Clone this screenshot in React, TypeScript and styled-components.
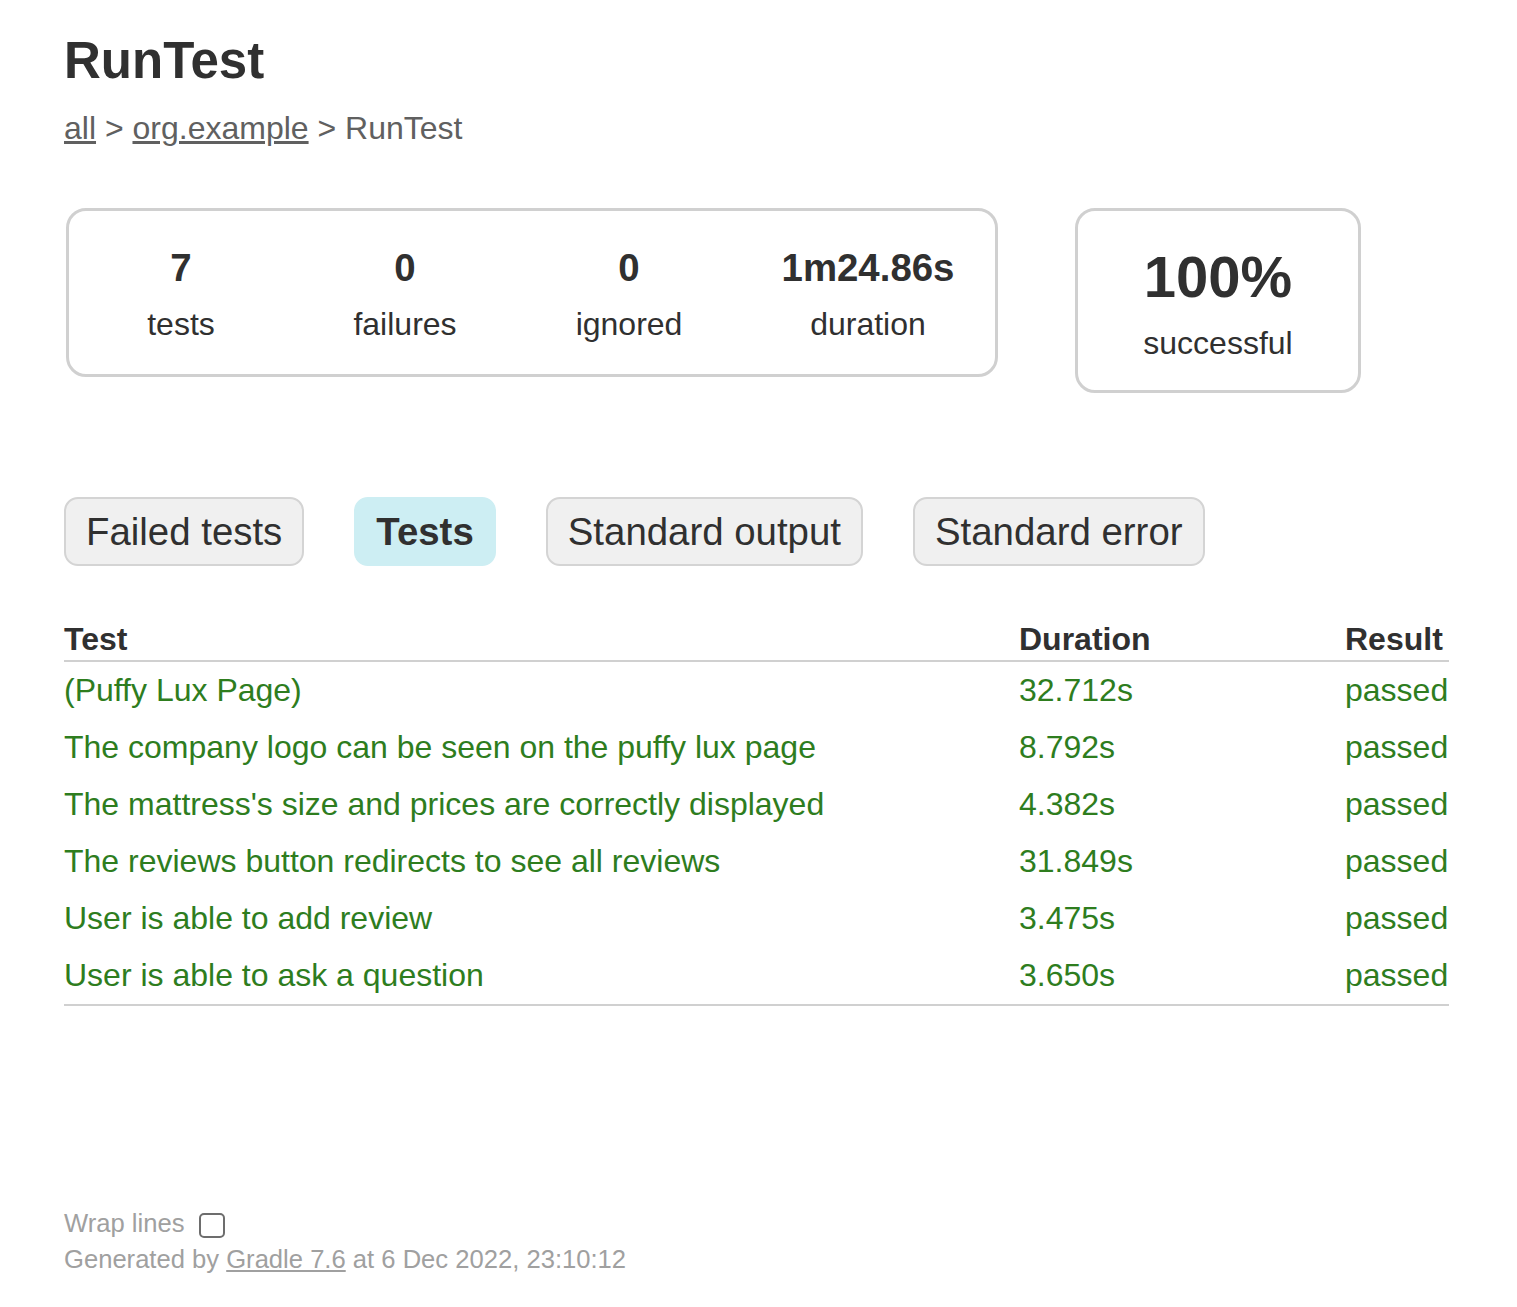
import React from "react";
import styled, { createGlobalStyle } from "styled-components";

const GlobalStyle = createGlobalStyle`
  html, body {
    margin: 0;
    padding: 0;
    background: #ffffff;
  }
  body {
    font-family: "Liberation Sans", Arial, Helvetica, sans-serif;
    color: #303030;
  }
`;

const Page = styled.div`
  padding: 31px 0 40px 64px;
`;

const Title = styled.h1`
  margin: 0;
  font-size: 51px;
  line-height: 60px;
  font-weight: bold;
  color: #303030;
  white-space: nowrap;
`;

const Breadcrumbs = styled.div`
  margin-top: 19px;
  font-size: 32px;
  line-height: 37px;
  color: #606060;
`;

const Crumb = styled.a`
  color: #606060;
  text-decoration: underline;
`;

const Summary = styled.div`
  display: flex;
  align-items: flex-start;
  margin-top: 61px;
  margin-left: 2px;
`;

const SummaryGroup = styled.div`
  display: flex;
  border: 3px solid #d0d0d0;
  border-radius: 20px;
`;

const InfoBox = styled.div<{ $width: number }>`
  width: ${(p) => p.$width}px;
  padding: 35px 0 31px;
  text-align: center;
`;

const Counter = styled.div`
  font-size: 38.4px;
  line-height: 44px;
  font-weight: bold;
  margin-bottom: 16px;
`;

const Percent = styled.div`
  font-size: 58px;
  line-height: 66px;
  font-weight: bold;
  margin-bottom: 15px;
`;

const Label = styled.div`
  font-size: 32px;
  line-height: 37px;
`;

const SuccessBox = styled.div`
  margin-left: 77px;
  width: 280px;
  border: 3px solid #d0d0d0;
  border-radius: 20px;
  padding: 33px 0 28px;
  text-align: center;
`;

const TabList = styled.ul`
  display: flex;
  gap: 50px;
  list-style: none;
  margin: 104px 0 0;
  padding: 0;
`;

const Tab = styled.li<{ $selected?: boolean }>`
  border: 2px solid ${(p) => (p.$selected ? "#cdeef3" : "#d4d4d4")};
  background: ${(p) => (p.$selected ? "#cdeef3" : "#f0f0f0")};
  border-radius: 14px;
  padding: 11px 20px 10px;
  font-size: 38.4px;
  line-height: 44px;
  font-weight: ${(p) => (p.$selected ? "bold" : "normal")};
  color: #303030;
  white-space: nowrap;
`;

const Table = styled.table`
  margin-top: 53px;
  width: 1385px;
  border-collapse: collapse;
  table-layout: fixed;
  border-bottom: 2px solid #d0d0d0;
`;

const Col = styled.col<{ $width: number }>`
  width: ${(p) => p.$width}px;
`;

const Th = styled.th`
  text-align: left;
  font-size: 32px;
  line-height: 37px;
  font-weight: bold;
  padding: 2px 0;
  color: #303030;
  border-bottom: 2px solid #d0d0d0;
  white-space: nowrap;
`;

const Td = styled.td`
  font-size: 32px;
  line-height: 37px;
  padding: 10px 0;
  color: #2e7d1e;
  white-space: nowrap;
`;

const Footer = styled.div`
  margin-top: 202px;
  font-size: 25.6px;
  color: #a0a0a0;
`;

const WrapRow = styled.label`
  display: flex;
  align-items: center;
  height: 31px;
  line-height: 31px;
`;

const Checkbox = styled.input`
  appearance: none;
  -webkit-appearance: none;
  box-sizing: border-box;
  width: 26px;
  height: 25px;
  margin: 4px 0 0 15px;
  border: 2px solid #6d6d6d;
  border-radius: 5px;
  background: #ffffff;
`;

const Generated = styled.div`
  margin-top: 5px;
  line-height: 30px;
  white-space: nowrap;
`;

const FooterLink = styled.a`
  color: #a0a0a0;
  text-decoration: underline;
`;

const rows = [
  { name: "(Puffy Lux Page)", duration: "32.712s" },
  { name: "The company logo can be seen on the puffy lux page", duration: "8.792s" },
  { name: "The mattress's size and prices are correctly displayed", duration: "4.382s" },
  { name: "The reviews button redirects to see all reviews", duration: "31.849s" },
  { name: "User is able to add review", duration: "3.475s" },
  { name: "User is able to ask a question", duration: "3.650s" },
];

const counters = [
  { value: "7", label: "tests", width: 224 },
  { value: "0", label: "failures", width: 224 },
  { value: "0", label: "ignored", width: 224 },
  { value: "1m24.86s", label: "duration", width: 254 },
];

const tabs = ["Failed tests", "Tests", "Standard output", "Standard error"];

export default function App() {
  return (
    <>
      <GlobalStyle />
      <Page>
        <Title>RunTest</Title>
        <Breadcrumbs>
          <Crumb href="#">all</Crumb> &gt; <Crumb href="#">org.example</Crumb> &gt; RunTest
        </Breadcrumbs>
        <Summary>
          <SummaryGroup>
            {counters.map((c) => (
              <InfoBox key={c.label} $width={c.width}>
                <Counter>{c.value}</Counter>
                <Label>{c.label}</Label>
              </InfoBox>
            ))}
          </SummaryGroup>
          <SuccessBox>
            <Percent>100%</Percent>
            <Label>successful</Label>
          </SuccessBox>
        </Summary>
        <TabList>
          {tabs.map((t) => (
            <Tab key={t} $selected={t === "Tests"}>
              {t}
            </Tab>
          ))}
        </TabList>
        <Table>
          <colgroup>
            <Col $width={955} />
            <Col $width={326} />
            <Col $width={104} />
          </colgroup>
          <thead>
            <tr>
              <Th>Test</Th>
              <Th>Duration</Th>
              <Th>Result</Th>
            </tr>
          </thead>
          <tbody>
            {rows.map((r) => (
              <tr key={r.name}>
                <Td>{r.name}</Td>
                <Td>{r.duration}</Td>
                <Td>passed</Td>
              </tr>
            ))}
          </tbody>
        </Table>
        <Footer>
          <WrapRow>
            Wrap lines
            <Checkbox type="checkbox" autoComplete="off" />
          </WrapRow>
          <Generated>
            Generated by <FooterLink href="#">Gradle 7.6</FooterLink> at 6 Dec 2022, 23:10:12
          </Generated>
        </Footer>
      </Page>
    </>
  );
}
